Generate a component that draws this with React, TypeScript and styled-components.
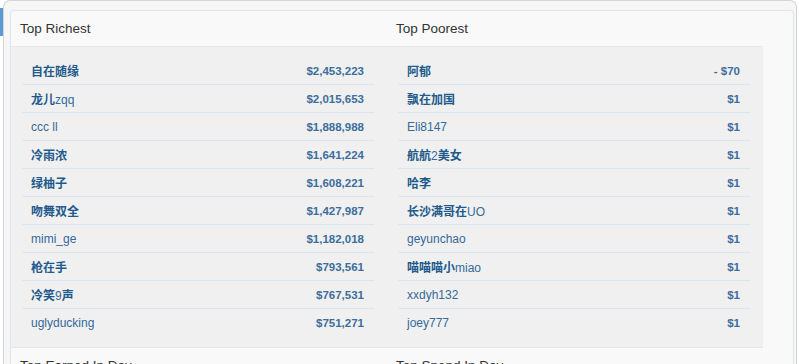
import React from 'react';
import styled, { createGlobalStyle } from 'styled-components';

const GlobalStyle = createGlobalStyle`
  html, body {
    margin: 0;
    background: #ffffff;
    overflow: hidden;
  }
  body {
    font-family: "Liberation Sans", "Noto Sans CJK SC", Arial, sans-serif;
  }
`;

type Entry = { name: string; amount: string };

const richest: Entry[] = [
  { name: '自在随缘', amount: '$2,453,223' },
  { name: '龙儿zqq', amount: '$2,015,653' },
  { name: 'ccc ll', amount: '$1,888,988' },
  { name: '冷雨浓', amount: '$1,641,224' },
  { name: '绿柚子', amount: '$1,608,221' },
  { name: '吻舞双全', amount: '$1,427,987' },
  { name: 'mimi_ge', amount: '$1,182,018' },
  { name: '枪在手', amount: '$793,561' },
  { name: '冷笑9声', amount: '$767,531' },
  { name: 'uglyducking', amount: '$751,271' },
];

const poorest: Entry[] = [
  { name: '阿郁', amount: '- $70' },
  { name: '飘在加国', amount: '$1' },
  { name: 'Eli8147', amount: '$1' },
  { name: '航航2美女', amount: '$1' },
  { name: '哈李', amount: '$1' },
  { name: '长沙满哥在UO', amount: '$1' },
  { name: 'geyunchao', amount: '$1' },
  { name: '喵喵喵小miao', amount: '$1' },
  { name: 'xxdyh132', amount: '$1' },
  { name: 'joey777', amount: '$1' },
];

const Page = styled.div`
  display: flex;
  align-items: flex-start;
  width: 799px;
`;

const SideStrip = styled.div`
  width: 3px;
  flex: none;
  display: flex;
  flex-direction: column;
  padding-top: 8px;
`;

const SideTab = styled.div`
  height: 28px;
  background: #5a9bd5;
`;

const OuterPanel = styled.div`
  width: 794px;
  flex: none;
  border: 1px solid #d4d4d4;
  border-bottom: none;
  border-radius: 7px 7px 0 0;
  background: #f6f6f6;
  padding: 9px 2px 0 6px;
  box-sizing: border-box;
  height: 400px;
`;

const Card = styled.div`
  width: 784px;
  border: 1px solid #d8e8f6;
  border-bottom: none;
  border-radius: 4px 4px 0 0;
  background: #f9f9f9;
  box-sizing: border-box;
  padding-right: 30px;
`;

const Section = styled.div`
  display: grid;
  grid-template-columns: 376px 376px;
`;

const Heading = styled.div`
  height: 35px;
  padding-left: 9px;
  display: flex;
  align-items: center;
  font-size: 13.5px;
  color: #333333;
  border-bottom: 1px solid #e8e8e8;
`;

const Body = styled.div<{ $empty?: boolean }>`
  background: #f0f0f0;
  padding: 10px 13px 11px 11px;
  border-bottom: 1px solid #d9e9f7;
  min-height: ${(p) => (p.$empty ? '60px' : '0')};
`;

const Row = styled.div`
  height: 27px;
  display: flex;
  align-items: center;
  justify-content: space-between;
  padding: 0 10px 0 9px;
  & + & {
    border-top: 1px solid #d8e7f5;
  }
`;

const Name = styled.span`
  font-size: 12px;
  color: #35699a;
`;

const Han = styled.span`
  font-weight: bold;
  color: #1f5a8c;
`;

const Amount = styled.span`
  font-size: 11.5px;
  font-weight: bold;
  color: #3d6e9c;
`;

function PlayerName({ text }: { text: string }) {
  const parts = text.split(/([\u4e00-\u9fff]+)/).filter(Boolean);
  return (
    <Name>
      {parts.map((part, i) =>
        /[\u4e00-\u9fff]/.test(part) ? <Han key={i}>{part}</Han> : <span key={i}>{part}</span>
      )}
    </Name>
  );
}

function Board({ entries }: { entries: Entry[] }) {
  return (
    <Body>
      {entries.map((e) => (
        <Row key={e.name}>
          <PlayerName text={e.name} />
          <Amount>{e.amount}</Amount>
        </Row>
      ))}
    </Body>
  );
}

export default function App() {
  return (
    <>
      <GlobalStyle />
      <Page>
        <SideStrip>
          <SideTab />
        </SideStrip>
        <OuterPanel>
          <Card>
            <Section>
              <Heading>Top Richest</Heading>
              <Heading>Top Poorest</Heading>
              <Board entries={richest} />
              <Board entries={poorest} />
              <Heading>Top Earned In Day</Heading>
              <Heading>Top Spend In Day</Heading>
              <Body $empty />
              <Body $empty />
            </Section>
          </Card>
        </OuterPanel>
      </Page>
    </>
  );
}
